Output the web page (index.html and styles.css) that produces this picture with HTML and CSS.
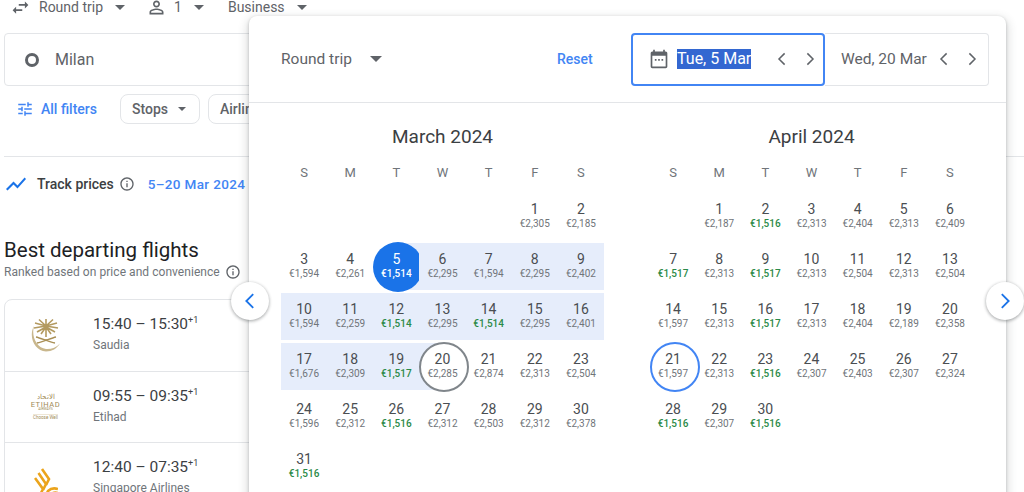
FILE: index.html
```html
<!DOCTYPE html>
<html lang="en">
    <head>
        <meta charset="UTF-8">
        <title>Flights</title>
        <link rel="stylesheet" href="styles.css">
    </head>
    <body>
        <svg class="defs">
            <symbol id="caret" viewBox="0 0 10 5"><path d="M0 0h10L5 5z"/></symbol>
            <symbol id="info" viewBox="0 0 24 24"><path d="M11 7h2v2h-2zm0 4h2v6h-2zm1-9C6.48 2 2 6.48 2 12s4.48 10 10 10 10-4.48 10-10S17.52 2 12 2zm0 18c-4.41 0-8-3.59-8-8s3.59-8 8-8 8 3.59 8 8-3.59 8-8 8z"/></symbol>
            <symbol id="left" viewBox="0 0 24 24"><path d="M15.5 4.5 8 12l7.500 7.500" fill="none" stroke="currentColor" stroke-width="2"/></symbol>
            <symbol id="right" viewBox="0 0 24 24"><path d="M8.500 4.500 16 12l-7.500 7.500" fill="none" stroke="currentColor" stroke-width="2"/></symbol>
        </svg>

        <main class="page">
            <div class="trip_bar">
                <svg class="icon_swap" viewBox="0 0 24 24"><path d="M6.990 11 3 15l3.990 4v-3H14v-2H6.990zM21 9l-3.990-4v3H10v2h7.010v3z"/></svg>
                <span class="trip_type">Round trip</span>
                <svg class="caret caret_trip"><use href="#caret"/></svg>
                <svg class="icon_person" viewBox="0 0 24 24"><path d="M12 5.900c1.160 0 2.100.94 2.100 2.100s-.94 2.100-2.100 2.100S9.900 9.160 9.900 8s.94-2.100 2.100-2.100m0 9c2.970 0 6.100 1.460 6.100 2.100v1.100H5.900V17c0-.64 3.130-2.100 6.100-2.100M12 4C9.790 4 8 5.790 8 8s1.790 4 4 4 4-1.790 4-4-1.790-4-4-4zm0 9c-2.670 0-8 1.340-8 4v3h16v-3c0-2.660-5.330-4-8-4z"/></svg>
                <span class="passengers">1</span>
                <svg class="caret caret_pass"><use href="#caret"/></svg>
                <span class="cabin">Business</span>
                <svg class="caret caret_cabin"><use href="#caret"/></svg>
            </div>

            <div class="search_box">
                <span class="origin_dot"></span>
                <span class="origin">Milan</span>
            </div>

            <div class="filters">
                <svg class="icon_tune" viewBox="0 0 24 24"><path d="M3 17v2h6v-2H3zM3 5v2h10V5H3zm10 16v-2h8v-2h-8v-2h-2v6h2zM7 9v2H3v2h4v2h2V9H7zm14 4v-2H11v2h10zm-6-4h2V7h4V5h-4V3h-2v6z"/></svg>
                <span class="all_filters">All filters</span>
                <span class="chip chip_stops">Stops <svg class="caret"><use href="#caret"/></svg></span>
                <span class="chip chip_air">Airlines</span>
            </div>

            <div class="track">
                <svg class="icon_chart" viewBox="0 0 24 24"><path d="M3.500 18.490l6-6.010 4 4L22 6.920l-1.410-1.410-7.090 7.970-4-4L2 16.990z"/></svg>
                <span class="track_label">Track prices</span>
                <svg class="icon_info"><use href="#info"/></svg>
                <span class="track_dates">5–20 Mar 2024</span>
            </div>

            <h2 class="best_title">Best departing flights</h2>
            <p class="best_sub">Ranked based on price and convenience <svg class="icon_info"><use href="#info"/></svg></p>

            <section class="flights">
                <div class="flight">
                    <div class="logo">
                        <svg class="logo_saudia" viewBox="0 0 32 34">
                            <g stroke="#b39a60" stroke-width="1.600" fill="none">
                                <path d="M16 19V6M16 8 9 1.500M16 8 23 1.500M16 8 5 5M16 8 27 5M16 8 4 10M16 8 28 10M16 9 7 14M16 9 25 14M16 9 11 16M16 9 21 16M16 8V1"/>
                            </g>
                            <path d="M6 19c5 1 13 5 19 6M26 19c-5 1-13 5-19 6" stroke="#a98f55" stroke-width="1.300" fill="none"/>
                            <path d="M4 8C-2 19 5 33 16 33.500c6 0 11-3 14-8-4 4-9 6-14 5.500C7 30 1 19 4 8z" fill="#c9b78d"/>
                        </svg>
                    </div>
                    <div class="flight_info">
                        <div class="times">15:40 – 15:30<sup>+1</sup></div>
                        <div class="airline">Saudia</div>
                    </div>
                </div>
                <div class="flight">
                    <div class="logo logo_etihad">
                        <span class="etihad_ar">الاتحاد</span>
                        <span class="etihad_name">ETIHAD</span>
                        <span class="etihad_small">AIRWAYS</span>
                        <span class="etihad_tag">Choose Well</span>
                    </div>
                    <div class="flight_info">
                        <div class="times">09:55 – 09:35<sup>+1</sup></div>
                        <div class="airline">Etihad</div>
                    </div>
                </div>
                <div class="flight">
                    <div class="logo">
                        <svg class="logo_sia" viewBox="0 0 24 32">
                            <g stroke="#eba41c" stroke-width="2.600" fill="none">
                                <path d="M8 1 15 11 12 17"/>
                                <path d="M4.500 5 12 16 9 22"/>
                                <path d="M1 10 9 21 6 27"/>
                                <path d="M9 33 14 23Q18 19 24 21"/>
                                <path d="M13 33 17 26Q20 24 24 25"/>
                            </g>
                        </svg>
                    </div>
                    <div class="flight_info">
                        <div class="times">12:40 – 07:35<sup>+1</sup></div>
                        <div class="airline">Singapore Airlines</div>
                    </div>
                </div>
            </section>
        </main>

        <div class="dialog">
            <header class="dialog_head">
                <span class="dialog_trip">Round trip</span>
                <svg class="caret dialog_caret"><use href="#caret"/></svg>
                <span class="reset">Reset</span>
                <div class="dates">
                    <div class="date date_active">
                        <svg class="icon_cal" viewBox="0 0 24 24"><path d="M20 3h-1V1h-2v2H7V1H5v2H4c-1.100 0-2 .9-2 2v16c0 1.100.9 2 2 2h16c1.100 0 2-.9 2-2V5c0-1.100-.9-2-2-2zm0 18H4V8h16zM7 12h2v2H7zm4 0h2v2h-2zm4 0h2v2h-2z"/></svg>
                        <span class="date_sel">Tue, 5 Mar</span>
                        <svg class="chev chev_first"><use href="#left"/></svg>
                        <svg class="chev"><use href="#right"/></svg>
                    </div>
                    <div class="date date_return">
                        <span class="date_text">Wed, 20 Mar</span>
                        <svg class="chev chev_ret"><use href="#left"/></svg>
                        <svg class="chev"><use href="#right"/></svg>
                    </div>
                </div>
            </header>

            <div class="months">
                <section class="month">
                    <h3 class="month_name">March 2024</h3>
                    <div class="weekdays"><span>S</span><span>M</span><span>T</span><span>W</span><span>T</span><span>F</span><span>S</span></div>
                    <div class="days">
                        <div></div><div></div><div></div><div></div><div></div>
                        <div class="day"><b>1</b><span>€2,305</span></div>
                        <div class="day"><b>2</b><span>€2,185</span></div>

                        <div class="day"><b>3</b><span>€1,594</span></div>
                        <div class="day"><b>4</b><span>€2,261</span></div>
                        <div class="day start selected"><b>5</b><span class="low">€1,514</span></div>
                        <div class="day range"><b>6</b><span>€2,295</span></div>
                        <div class="day range"><b>7</b><span>€1,594</span></div>
                        <div class="day range"><b>8</b><span>€2,295</span></div>
                        <div class="day range"><b>9</b><span>€2,402</span></div>

                        <div class="day range"><b>10</b><span>€1,594</span></div>
                        <div class="day range"><b>11</b><span>€2,259</span></div>
                        <div class="day range"><b>12</b><span class="low">€1,514</span></div>
                        <div class="day range"><b>13</b><span>€2,295</span></div>
                        <div class="day range"><b>14</b><span class="low">€1,514</span></div>
                        <div class="day range"><b>15</b><span>€2,295</span></div>
                        <div class="day range"><b>16</b><span>€2,401</span></div>

                        <div class="day range"><b>17</b><span>€1,676</span></div>
                        <div class="day range"><b>18</b><span>€2,309</span></div>
                        <div class="day range"><b>19</b><span class="low">€1,517</span></div>
                        <div class="day end ring"><b>20</b><span>€2,285</span></div>
                        <div class="day"><b>21</b><span>€2,874</span></div>
                        <div class="day"><b>22</b><span>€2,313</span></div>
                        <div class="day"><b>23</b><span>€2,504</span></div>

                        <div class="day"><b>24</b><span>€1,596</span></div>
                        <div class="day"><b>25</b><span>€2,312</span></div>
                        <div class="day"><b>26</b><span class="low">€1,516</span></div>
                        <div class="day"><b>27</b><span>€2,312</span></div>
                        <div class="day"><b>28</b><span>€2,503</span></div>
                        <div class="day"><b>29</b><span>€2,312</span></div>
                        <div class="day"><b>30</b><span>€2,378</span></div>

                        <div class="day"><b>31</b><span class="low">€1,516</span></div>
                    </div>
                </section>

                <section class="month">
                    <h3 class="month_name">April 2024</h3>
                    <div class="weekdays"><span>S</span><span>M</span><span>T</span><span>W</span><span>T</span><span>F</span><span>S</span></div>
                    <div class="days">
                        <div></div>
                        <div class="day"><b>1</b><span>€2,187</span></div>
                        <div class="day"><b>2</b><span class="low">€1,516</span></div>
                        <div class="day"><b>3</b><span>€2,313</span></div>
                        <div class="day"><b>4</b><span>€2,404</span></div>
                        <div class="day"><b>5</b><span>€2,313</span></div>
                        <div class="day"><b>6</b><span>€2,409</span></div>

                        <div class="day"><b>7</b><span class="low">€1,517</span></div>
                        <div class="day"><b>8</b><span>€2,313</span></div>
                        <div class="day"><b>9</b><span class="low">€1,517</span></div>
                        <div class="day"><b>10</b><span>€2,313</span></div>
                        <div class="day"><b>11</b><span>€2,504</span></div>
                        <div class="day"><b>12</b><span>€2,313</span></div>
                        <div class="day"><b>13</b><span>€2,504</span></div>

                        <div class="day"><b>14</b><span>€1,597</span></div>
                        <div class="day"><b>15</b><span>€2,313</span></div>
                        <div class="day"><b>16</b><span class="low">€1,517</span></div>
                        <div class="day"><b>17</b><span>€2,313</span></div>
                        <div class="day"><b>18</b><span>€2,404</span></div>
                        <div class="day"><b>19</b><span>€2,189</span></div>
                        <div class="day"><b>20</b><span>€2,358</span></div>

                        <div class="day ring ring_blue"><b>21</b><span>€1,597</span></div>
                        <div class="day"><b>22</b><span>€2,313</span></div>
                        <div class="day"><b>23</b><span class="low">€1,516</span></div>
                        <div class="day"><b>24</b><span>€2,307</span></div>
                        <div class="day"><b>25</b><span>€2,403</span></div>
                        <div class="day"><b>26</b><span>€2,307</span></div>
                        <div class="day"><b>27</b><span>€2,324</span></div>

                        <div class="day"><b>28</b><span class="low">€1,516</span></div>
                        <div class="day"><b>29</b><span>€2,307</span></div>
                        <div class="day"><b>30</b><span class="low">€1,516</span></div>
                    </div>
                </section>
            </div>
        </div>

        <button class="pager pager_prev"><svg><use href="#left"/></svg></button>
        <button class="pager pager_next"><svg><use href="#right"/></svg></button>
    </body>
</html>
```

FILE: styles.css
```css
:root{
    --blue:#1a73e8;
    --linkblue:#4285f4;
    --line:#e3e5e8;
    --text:#3c4043;
    --daytext:#4a4e52;
    --grey:#70757a;
    --icon:#5f6368;
    --green:#2b8a47;
    --range:#e6edfb;
}
*,*::before,*::after{
    padding: 0;
    margin: 0;
    box-sizing: border-box;
}
html,body{
    height: 100%;
    overflow: hidden;
}
body{
    position: relative;
    width: 1024px;
    height: 492px;
    font-family: Roboto,"Liberation Sans",sans-serif;
    color: var(--text);
    background-color: #fff;
}
.defs{
    display: none;
}
svg{
    fill: currentColor;
    flex: none;
}
.caret{
    width: 10px;
    height: 5px;
    color: var(--icon);
}

/* page behind the dialog */
.page{
    padding-left: 4px;
}
.trip_bar{
    display: flex;
    align-items: center;
    height: 14px;
    font-size: 14px;
    color: var(--icon);
}
.icon_swap{
    width: 21px;
    height: 21px;
    margin-left: 6px;
    color: var(--icon);
}
.trip_type{
    margin-left: 8px;
}
.caret_trip{
    margin-left: 12px;
}
.icon_person{
    width: 21px;
    height: 21px;
    margin-left: 21px;
}
.passengers{
    margin-left: 7px;
}
.caret_pass{
    margin-left: 12px;
}
.cabin{
    margin-left: 24px;
}
.caret_cabin{
    margin-left: 12px;
}
.search_box{
    display: flex;
    align-items: center;
    width: 700px;
    height: 53px;
    margin-top: 19px;
    border: 1px solid var(--line);
    border-radius: 4px;
}
.origin_dot{
    width: 14px;
    height: 14px;
    margin-left: 20px;
    border: 3px solid var(--icon);
    border-radius: 50%;
}
.origin{
    margin-left: 16px;
    font-size: 16px;
    color: var(--icon);
}
.filters{
    display: flex;
    align-items: center;
    height: 30px;
    margin-top: 8px;
}
.icon_tune{
    width: 18px;
    height: 18px;
    margin-left: 12px;
    color: var(--linkblue);
}
.all_filters{
    margin-left: 7px;
    font-size: 14px;
    font-weight: 500;
    color: var(--linkblue);
}
.chip{
    display: flex;
    align-items: center;
    height: 30px;
    border: 1px solid var(--line);
    border-radius: 8px;
    font-size: 14px;
    font-weight: 500;
    color: var(--icon);
}
.chip_stops{
    width: 80px;
    margin-left: 23px;
    padding-left: 11px;
    gap: 10px;
}
.chip_stops .caret{
    width: 8px;
    height: 4px;
}
.chip_air{
    width: 90px;
    margin-left: 8px;
    padding-left: 11px;
}
.track{
    display: flex;
    align-items: center;
    height: 54px;
    margin-top: 32px;
    border-top: 1px solid var(--line);
}
.icon_chart{
    width: 24px;
    height: 24px;
    color: var(--blue);
}
.track_label{
    margin-left: 9px;
    font-size: 14px;
    font-weight: 500;
    color: var(--text);
}
.icon_info{
    width: 16px;
    height: 16px;
    color: var(--icon);
}
.track .icon_info{
    margin-left: 5px;
}
.track_dates{
    margin-left: 13px;
    font-size: 13.500px;
    font-weight: 500;
    letter-spacing: .35px;
    color: var(--linkblue);
}
.best_title{
    margin-top: 27px;
    font-size: 20.500px;
    line-height: 26px;
    font-weight: 400;
    color: #202124;
}
.best_sub{
    display: flex;
    align-items: center;
    gap: 5px;
    height: 16px;
    margin-top: 1px;
    font-size: 12px;
    letter-spacing: .05px;
    color: var(--grey);
}
.flights{
    width: 700px;
    margin-top: 19px;
    border: 1px solid var(--line);
    border-radius: 8px 8px 0 0;
}
.flight{
    display: flex;
    height: 71.500px;
    border-bottom: 1px solid var(--line);
}
.logo{
    display: flex;
    flex-direction: column;
    align-items: center;
    justify-content: center;
    width: 81px;
    flex: none;
    overflow: hidden;
}
.logo_saudia{
    width: 32px;
    height: 34px;
}
.logo_sia{
    width: 24px;
    height: 32px;
    margin-top: 11px;
}
.logo_etihad{
    color: #a08a55;
    line-height: 1;
}
.etihad_ar{
    font-size: 7px;
}
.etihad_name{
    font-size: 7.500px;
    letter-spacing: .6px;
}
.etihad_small{
    margin-bottom: 2px;
    font-size: 3.500px;
}
.etihad_tag{
    padding-top: 1px;
    border-top: 1px solid #eee6d5;
    font-size: 4.500px;
}
.flight_info{
    padding-top: 14px;
    margin-left: 7px;
}
.times{
    font-size: 15.500px;
    line-height: 20px;
    font-weight: 400;
    color: var(--text);
}
.times sup{
    font-size: 9px;
    line-height: 0;
}
.airline{
    margin-top: 3px;
    font-size: 12px;
    line-height: 16px;
    color: var(--grey);
}

/* date picker */
.dialog{
    position: absolute;
    left: 249px;
    top: 16px;
    width: 757px;
    height: 500px;
    background-color: #fff;
    border-radius: 8px;
    box-shadow: 0 1px 3px rgba(60,64,67,.3),0 4px 8px 3px rgba(60,64,67,.15);
}
.dialog_head{
    display: flex;
    align-items: center;
    height: 87px;
    padding-left: 32px;
    padding-right: 17px;
    border-bottom: 1px solid var(--line);
}
.dialog_trip{
    font-size: 15.500px;
    color: var(--icon);
}
.dialog_caret{
    width: 12px;
    height: 6px;
    margin-left: 18px;
}
.reset{
    margin-left: 175px;
    font-size: 14px;
    font-weight: 500;
    color: var(--linkblue);
}
.dates{
    display: flex;
    margin-left: auto;
}
.date{
    display: flex;
    align-items: center;
    height: 53px;
    font-size: 15.500px;
    color: var(--icon);
}
.date_active{
    width: 194px;
    padding-left: 16px;
    border: 2px solid var(--linkblue);
    border-radius: 4px;
}
.date_return{
    width: 164px;
    padding-left: 16px;
    border: 1px solid var(--line);
    border-left: none;
    border-radius: 0 4px 4px 0;
}
.icon_cal{
    width: 20px;
    height: 20px;
    color: var(--icon);
}
.date_sel{
    width: 74px;
    height: 20px;
    margin-left: 8px;
    overflow: hidden;
    white-space: nowrap;
    font-size: 16px;
    line-height: 20px;
    color: #fff;
    background-color: #3367d1;
}
.chev{
    width: 18px;
    height: 18px;
    margin-left: 10px;
    color: var(--icon);
}
.chev_first{
    margin-left: 22px;
}
.chev_ret{
    margin-left: 8px;
}
.months{
    display: flex;
    gap: 46px;
    padding-left: 32px;
}
.month{
    width: 323px;
}
.month_name{
    margin-top: 21px;
    font-size: 19px;
    line-height: 26px;
    font-weight: 400;
    text-align: center;
    color: var(--text);
}
.weekdays{
    display: grid;
    grid-template-columns: repeat(7,1fr);
    height: 20px;
    margin-top: 13px;
    font-size: 13px;
    font-weight: 400;
    line-height: 20px;
    text-align: center;
    color: var(--grey);
}
.days{
    display: grid;
    grid-template-columns: repeat(7,1fr);
    grid-auto-rows: 47px;
    row-gap: 3px;
    margin-top: 10px;
}
.day{
    position: relative;
    display: flex;
    flex-direction: column;
    align-items: center;
    padding-top: 8px;
}
.day b{
    position: relative;
    font-size: 14px;
    line-height: 16px;
    font-weight: 400;
    color: var(--daytext);
}
.day span{
    position: relative;
    font-size: 10px;
    line-height: 13px;
    color: var(--grey);
}
.day .low{
    font-weight: 500;
    color: var(--green);
}
.range{
    background-color: var(--range);
}
.start{
    background-image: linear-gradient(90deg,transparent 50%,var(--range) 50%);
}
.end{
    background-image: linear-gradient(90deg,var(--range) 50%,transparent 50%);
}
.selected::before,.ring::before{
    content: "";
    position: absolute;
    left: calc(50% + 2px);
    top: 50%;
    width: 50px;
    height: 50px;
    transform: translate(-50%,-50%);
    border-radius: 50%;
}
.selected::before{
    background-color: var(--blue);
}
.selected b,.selected .low{
    color: #fff;
}
.ring::before{
    background-color: #fff;
    border: 2px solid #80868b;
}
.ring_blue::before{
    border-color: var(--linkblue);
}
.pager{
    position: absolute;
    top: 282px;
    display: flex;
    align-items: center;
    justify-content: center;
    width: 38px;
    height: 38px;
    border: none;
    border-radius: 50%;
    color: var(--blue);
    background-color: #fff;
    box-shadow: 0 1px 3px rgba(60,64,67,.3),0 1px 3px 1px rgba(60,64,67,.15);
}
.pager svg{
    width: 22px;
    height: 22px;
}
.pager_prev{
    left: 231px;
}
.pager_next{
    left: 986px;
}
```
